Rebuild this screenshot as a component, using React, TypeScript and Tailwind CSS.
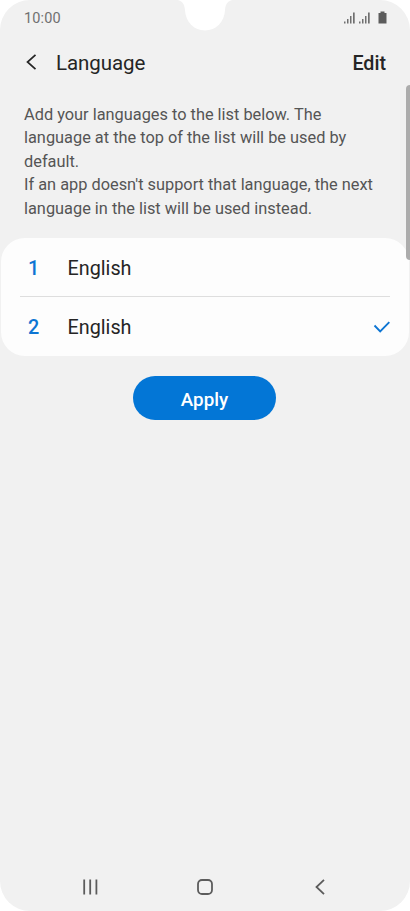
import { ReactNode } from "react";

const description = [
  "Add your languages to the list below. The",
  "language at the top of the list will be used by",
  "default.",
  "If an app doesn't support that language, the next",
  "language in the list will be used instead.",
];

const languages = [
  { id: 1, name: "English", selected: false },
  { id: 2, name: "English", selected: true },
];

function Notch() {
  return (
    <svg className="absolute left-[177px] top-0" width="56" height="31" viewBox="0 0 56 31" fill="#fff">
      <path d="M0 0C5 .5 7.500 4 8 10C8.500 22 17 30.500 28 30.500S47.500 22 48 10C48.500 4 51 .5 56 0Z" />
    </svg>
  );
}

function Signal() {
  return (
    <svg width="11" height="12" viewBox="0 0 11 12" fill="#707070">
      <path d="M0 9.500h1.500v2H0zM3 7h1.500v4.500H3zM6 4h1.500v7.500H6zM9 .5h1.700v11H9z" />
    </svg>
  );
}

function StatusBar() {
  return (
    <div className="flex h-[36px] items-center justify-between pl-6 pr-[23px]">
      <span className="mt-[2px] text-[14.5px] tracking-[0.15px] text-[#707070]">10:00</span>
      <div className="flex items-center gap-[4px]">
        <Signal />
        <Signal />
        <svg className="ml-[4px] -mt-px" width="9" height="13" viewBox="0 0 9 13" fill="#5c5c5c">
          <path d="M2.500 .5h4v1.500H8.500V12.500H.5V2h2z" />
        </svg>
      </div>
    </div>
  );
}

function Header() {
  return (
    <header className="flex h-[54px] items-center pl-[26px] pr-6">
      <svg className="-mt-[2px]" width="11" height="16" viewBox="0 0 11 16" fill="none" stroke="#252525" strokeWidth="1.700">
        <path d="M9.500 .8L1.500 8L9.500 15.200" />
      </svg>
      <h1 className="ml-[19px] mt-px text-[20.5px] tracking-[-0.08px] text-[#252525]">Language</h1>
      <button className="ml-auto mt-[2px] text-[19.7px] font-medium text-[#252525]">Edit</button>
    </header>
  );
}

function Row({ id, children, selected }: { id: number; children: ReactNode; selected: boolean }) {
  return (
    <li className="flex h-[59px] items-center pl-2 pt-[3px] text-[19.8px]">
      <span className="w-[39.500px] font-medium text-[#0d75d3]">{id}</span>
      <span className="text-[#252525]">{children}</span>
      {selected && (
        <svg className="-mt-[3px] ml-auto" width="17" height="12" viewBox="0 0 17 12" fill="none" stroke="#0d75d3" strokeWidth="1.900">
          <path d="M1.500 4.500L7.200 10.300L16.300 1.200" />
        </svg>
      )}
    </li>
  );
}

function NavBar() {
  return (
    <nav className="mt-auto flex h-[48px] items-center pl-[82px]">
      <svg width="16" height="16" viewBox="0 0 16 16" fill="none" stroke="#5c5c5c" strokeWidth="1.800">
        <path d="M2.200 .5v15M8.200 .5v15M14.400 .5v15" />
      </svg>
      <svg className="ml-[99px]" width="16" height="16" viewBox="0 0 16 16" fill="none" stroke="#5c5c5c" strokeWidth="1.800">
        <rect x="1" y="1" width="14" height="14" rx="4" />
      </svg>
      <svg className="ml-[101px]" width="11" height="16" viewBox="0 0 11 16" fill="none" stroke="#5c5c5c" strokeWidth="1.800">
        <path d="M10 .8L2.500 8L10 15.200" />
      </svg>
    </nav>
  );
}

export default function App() {
  return (
    <div className="h-[911px] w-[410px] bg-white font-['Roboto',sans-serif]">
      <main className="relative flex h-[911px] flex-col overflow-hidden rounded-[30px] bg-[#f1f1f1]">
        <Notch />
        <StatusBar />
        <Header />

        <p className="mt-[12.500px] pl-6 text-[16.35px] leading-[23.500px] text-[#555]">
          {description.map((line) => (
            <span key={line} className="block whitespace-nowrap">
              {line}
            </span>
          ))}
        </p>

        <ul className="mx-px mt-[18.300px] h-[118px] divide-y divide-[#dedede] rounded-[24px] bg-[#fdfdfd] px-[19px]">
          {languages.map((language) => (
            <Row key={language.id} id={language.id} selected={language.selected}>
              {language.name}
            </Row>
          ))}
        </ul>

        <button className="ml-[133px] mt-5 h-[44px] w-[143px] rounded-full bg-[#0376d6] pt-[3px] text-[18.8px] font-medium text-white">
          Apply
        </button>

        <NavBar />

        {/* scroll indicator */}
        <div className="absolute right-0 top-[85px] h-[175px] w-[4px] rounded-l-full bg-[#acacac]" />
      </main>
    </div>
  );
}
